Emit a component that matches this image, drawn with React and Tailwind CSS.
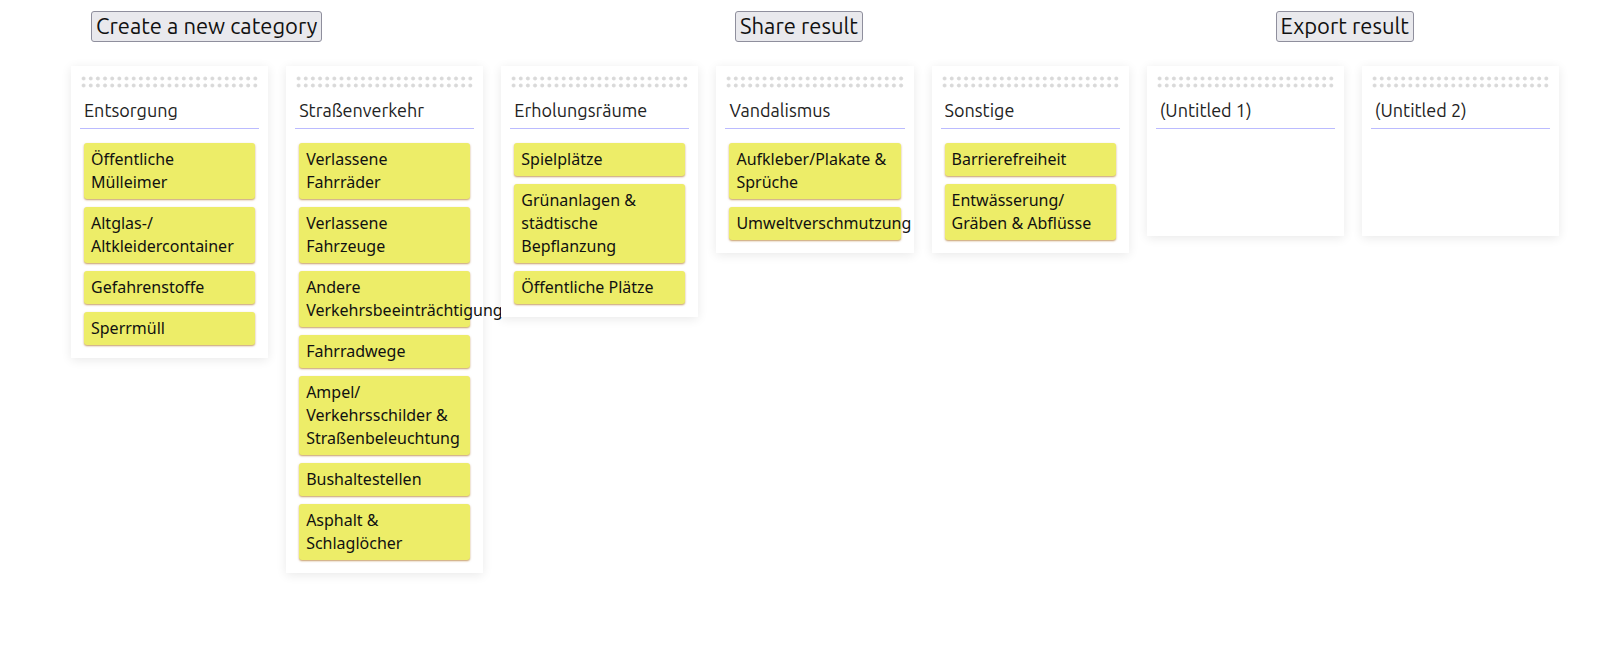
const categories = [
  { title: "Entsorgung", cards: ["Öffentliche Mülleimer", "Altglas-/ Altkleidercontainer", "Gefahrenstoffe", "Sperrmüll"] },
  {
    title: "Straßenverkehr",
    cards: [
      "Verlassene Fahrräder",
      "Verlassene Fahrzeuge",
      "Andere Verkehrsbeeinträchtigung",
      "Fahrradwege",
      "Ampel/ Verkehrsschilder & Straßenbeleuchtung",
      "Bushaltestellen",
      "Asphalt & Schlaglöcher",
    ],
  },
  { title: "Erholungsräume", cards: ["Spielplätze", "Grünanlagen & städtische Bepflanzung", "Öffentliche Plätze"] },
  { title: "Vandalismus", cards: ["Aufkleber/Plakate & Sprüche", "Umweltverschmutzung"] },
  { title: "Sonstige", cards: ["Barrierefreiheit", "Entwässerung/ Gräben & Abflüsse"] },
  { title: "(Untitled 1)", cards: [] },
  { title: "(Untitled 2)", cards: [] },
];

function ToolbarButton({ children }) {
  return (
    <button
      type="button"
      className="rounded-[3px] border border-[#8f8f9d] bg-[#e9e9ed] px-1 pb-px font-['Ubuntu','Noto_Sans',sans-serif] text-[22px] leading-[28px] text-[#111]"
    >
      {children}
    </button>
  );
}

function Category({ title, cards }) {
  return (
    <section className="isolate flex min-h-[170px] flex-col bg-white px-[9px] pt-[9px] pb-[13px] shadow-[0_2px_10px_rgba(0,0,0,0.09)]">
      <div className="h-[14px] cursor-grab bg-[radial-gradient(circle,#d9d9d9_1.5px,transparent_2.4px)] bg-[size:4%_50%]" />
      <input
        type="text"
        aria-label="Category name"
        defaultValue={title}
        className="mt-2 h-8 w-full border-b border-[#bbbbff] px-1 pb-[6px] font-['Ubuntu','Noto_Sans',sans-serif] text-[18px] leading-[25px] text-[#222] outline-none"
      />
      <ul className="mt-[14px] flex flex-col gap-2 px-1">
        {cards.map((card) => (
          <li
            key={card}
            className="cursor-grab rounded-[3px] bg-[#eded68] px-[7px] py-[5px] text-[16px] leading-[23px] text-[#111] shadow-[0_1px_2px_rgba(160,90,0,0.6)]"
          >
            {card}
          </li>
        ))}
      </ul>
    </section>
  );
}

export default function App() {
  return (
    <main className="min-h-screen bg-white pt-[11px] font-['Noto_Sans',sans-serif]">
      <header className="flex justify-between pr-[186px] pl-[91px]">
        <ToolbarButton>Create a new category</ToolbarButton>
        <ToolbarButton>Share result</ToolbarButton>
        <ToolbarButton>Export result</ToolbarButton>
      </header>
      <div className="mt-6 grid grid-cols-7 items-start gap-[18px] pr-[41px] pl-[71px]">
        {categories.map((category) => (
          <Category key={category.title} {...category} />
        ))}
      </div>
    </main>
  );
}
